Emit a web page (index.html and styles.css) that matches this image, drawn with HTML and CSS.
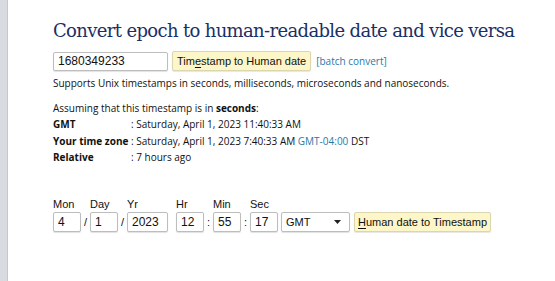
FILE: index.html
```html
<!DOCTYPE html>
<html>
<head>
<meta charset="utf-8">
<link rel="stylesheet" href="styles.css">
</head>
<body>
<div class="page">
  <aside class="rail"></aside>
  <main class="content">
    <h1 class="title">Convert epoch to human-readable date and vice versa</h1>
    <form class="row ts-row">
      <input class="field ts-field" type="text" value="1680349233">
      <button class="btn" type="button">Tim<u>e</u>stamp to Human date</button>
      <a class="link batch" href="#">[batch convert]</a>
    </form>
    <p class="note">Supports Unix timestamps in seconds, milliseconds, microseconds and nanoseconds.</p>
    <div class="result">
      <div class="assume">Assuming that this timestamp is in <b>seconds</b>:</div>
      <div class="kv"><b class="k">GMT</b><span>: Saturday, April 1, 2023 11:40:33 AM</span></div>
      <div class="kv"><b class="k">Your time zone</b><span>: Saturday, April 1, 2023 7:40:33 AM <a class="link" href="#">GMT-04:00</a> DST</span></div>
      <div class="kv"><b class="k">Relative</b><span>: 7 hours ago</span></div>
    </div>
    <form class="row date-row">
      <label class="cell"><span class="lbl">Mon</span><input class="field f-sm" type="text" value="4"></label>
      <span class="sep">/</span>
      <label class="cell"><span class="lbl">Day</span><input class="field f-sm" type="text" value="1"></label>
      <span class="sep">/</span>
      <label class="cell"><span class="lbl">Yr</span><input class="field f-yr" type="text" value="2023"></label>
      <span class="gap"></span>
      <label class="cell"><span class="lbl">Hr</span><input class="field f-sm" type="text" value="12"></label>
      <span class="sep">:</span>
      <label class="cell"><span class="lbl">Min</span><input class="field f-sm" type="text" value="55"></label>
      <span class="sep">:</span>
      <label class="cell"><span class="lbl">Sec</span><input class="field f-sm" type="text" value="17"></label>
      <div class="select"><span>GMT</span><svg class="caret" width="7" height="4" viewBox="0 0 7 4"><path d="M0 0H7L3.5 4Z" fill="#222"/></svg></div>
      <button class="btn btn2" type="button"><u>H</u>uman date to Timestamp</button>
    </form>
  </main>
</div>
</body>
</html>
```

FILE: styles.css
```css
html, body { margin: 0; padding: 0; background: #fff; }
body { font-family: "Open Sans", sans-serif; font-size: 10px; color: #111; }
.page { display: flex; min-height: 281px; }
.rail { width: 7px; background: #d8dce0; border-right: 1px solid #c3c8cd; flex: none; }
.content { padding: 18px 0 0 45px; flex: 1; }
.title {
  margin: 0; font-family: "DejaVu Serif", serif; font-weight: normal;
  font-size: 18px; line-height: 26px; color: #1b2f66; letter-spacing: -0.65px;
  white-space: nowrap;
}
.row { display: flex; align-items: center; margin: 0; }
.ts-row { margin-top: 7px; }
.field {
  box-sizing: border-box; height: 19px; border: 1px solid #bdbdbd; border-radius: 2px;
  font-family: "Liberation Sans", sans-serif; font-size: 12px; color: #111;
  padding: 0 4px; margin: 0; box-shadow: 0 1px 1px rgba(0,0,0,0.12); outline: none;
}
.ts-field { width: 115px; }
.btn {
  box-sizing: border-box; height: 20px; margin: 0 0 0 4px; padding: 0 4px;
  background: #fdf6c8; border: 1px solid #dcd6ae; border-radius: 2px;
  font-family: "Liberation Sans", sans-serif; font-size: 11px; color: #111;
  box-shadow: 0 1px 1px rgba(0,0,0,0.1); white-space: nowrap;
}
.btn u { text-decoration-thickness: 1px; text-underline-offset: 2px; }
.link { color: #2b78a8; text-decoration: none; }
.batch { font-size: 10px; margin-left: 5px; }
.note { margin: 4px 0 0; line-height: 16px; }
.result { margin-top: 9px; line-height: 16.3px; }
.kv { display: flex; }
.k { width: 78px; flex: none; }
.date-row { margin-top: 33px; align-items: flex-end; }
.cell { display: flex; flex-direction: column; }
.lbl { line-height: 13px; margin-bottom: 1px; font-family: "Liberation Sans", sans-serif; font-size: 11px; }
.cell .field, .date-row .btn { height: 20px; }
.f-sm { width: 28px; }
.f-yr { width: 41px; }
.sep { width: 9px; text-align: center; line-height: 20px; font-family: "Liberation Sans", sans-serif; font-size: 11px; }
.gap { width: 8px; }
.select {
  box-sizing: border-box; margin-left: 3px; width: 69px; height: 20px;
  border: 1px solid #bdbdbd; border-radius: 2px; box-shadow: 0 1px 1px rgba(0,0,0,0.12);
  display: flex; align-items: center; justify-content: space-between; padding: 0 8px 0 4px;
  font-family: "Liberation Sans", sans-serif; font-size: 11px; color: #111;
}
.btn2 { margin-left: 4px; padding: 0 3px; }
```
